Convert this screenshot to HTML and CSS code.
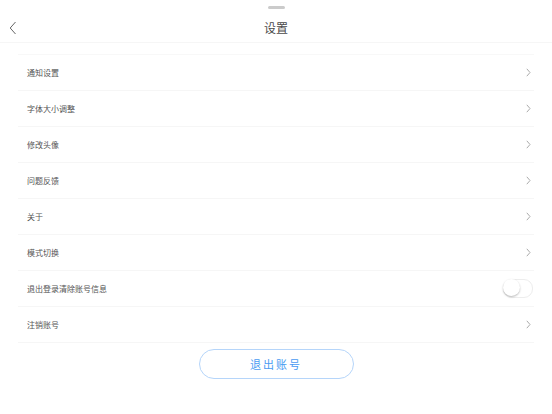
FILE: index.html
```html
<!DOCTYPE html>
<html lang="zh">
<head>
    <meta charset="utf-8">
    <title>设置</title>
    <link rel="stylesheet" href="styles.css">
</head>
<body>
    <div class="page">
        <div class="handle"></div>

        <div class="header">
            <svg class="back" width="8" height="14" viewBox="0 0 8 14">
                <path d="M6.5 1 L1.2 7 L6.5 13" fill="none" stroke="#666" stroke-width="1"/>
            </svg>
            <span class="title">设置</span>
        </div>

        <div class="list">
            <div class="row"><span>通知设置</span><svg class="arrow" width="5" height="9" viewBox="0 0 5 9"><path d="M0.8 0.8 L4 4.5 L0.8 8.2" fill="none" stroke="#aaa" stroke-width="1"/></svg></div>
            <div class="row"><span>字体大小调整</span><svg class="arrow" width="5" height="9" viewBox="0 0 5 9"><path d="M0.8 0.8 L4 4.5 L0.8 8.2" fill="none" stroke="#aaa" stroke-width="1"/></svg></div>
            <div class="row"><span>修改头像</span><svg class="arrow" width="5" height="9" viewBox="0 0 5 9"><path d="M0.8 0.8 L4 4.5 L0.8 8.2" fill="none" stroke="#aaa" stroke-width="1"/></svg></div>
            <div class="row"><span>问题反馈</span><svg class="arrow" width="5" height="9" viewBox="0 0 5 9"><path d="M0.8 0.8 L4 4.5 L0.8 8.2" fill="none" stroke="#aaa" stroke-width="1"/></svg></div>
            <div class="row"><span>关于</span><svg class="arrow" width="5" height="9" viewBox="0 0 5 9"><path d="M0.8 0.8 L4 4.5 L0.8 8.2" fill="none" stroke="#aaa" stroke-width="1"/></svg></div>
            <div class="row"><span>模式切换</span><svg class="arrow" width="5" height="9" viewBox="0 0 5 9"><path d="M0.8 0.8 L4 4.5 L0.8 8.2" fill="none" stroke="#aaa" stroke-width="1"/></svg></div>
            <div class="row"><span>退出登录清除账号信息</span><span class="switch"><span class="knob"></span></span></div>
            <div class="row"><span>注销账号</span><svg class="arrow" width="5" height="9" viewBox="0 0 5 9"><path d="M0.8 0.8 L4 4.5 L0.8 8.2" fill="none" stroke="#aaa" stroke-width="1"/></svg></div>
        </div>

        <div class="logout">
            <button>退出账号</button>
        </div>
    </div>
</body>
</html>
```
FILE: styles.css
```css
body,html{
    margin: 0;
    padding: 0;
    background-color: #fff;
    font-family: "Noto Sans CJK SC", "Noto Sans", sans-serif;
}
.page{
    width: 552px;
    height: 414px;
    display: flex;
    flex-direction: column;
}
.handle{
    width: 17px;
    height: 3px;
    border-radius: 2px;
    background-color: #cbcbcb;
    margin: 6px auto 0;
}
.header{
    height: 30px;
    padding-top: 3px;
    display: flex;
    align-items: center;
    justify-content: center;
    position: relative;
    border-bottom: 1px solid #f6f6f6;
}
.back{
    position: absolute;
    left: 9px;
    top: 12px;
}
.title{
    font-size: 12px;
    color: #4a4a4a;
}
.list{
    margin: 11px 18px 0;
    border-top: 1px solid #f8f8f8;
}
.row{
    height: 35px;
    border-bottom: 1px solid #f6f6f6;
    display: flex;
    align-items: center;
    justify-content: space-between;
    padding: 0 3px 0 9px;
    font-size: 8px;
    color: #555;
}
.switch{
    width: 28px;
    height: 17px;
    border-radius: 9px;
    border: 1px solid #ededed;
    position: relative;
    margin-right: -2px;
}
.knob{
    position: absolute;
    left: -1px;
    top: -1px;
    width: 17px;
    height: 17px;
    border-radius: 50%;
    background-color: #fff;
    box-shadow: 0 1px 2px rgba(0, 0, 0, 0.28);
}
.logout{
    display: flex;
    justify-content: center;
    margin-top: 6px;
}
button{
    width: 155px;
    height: 30px;
    border-radius: 15px;
    border: 1px solid #b5d5fa;
    background-color: #fff;
    color: #4a9bf2;
    font-family: inherit;
    font-size: 11px;
    letter-spacing: 2px;
}
```
